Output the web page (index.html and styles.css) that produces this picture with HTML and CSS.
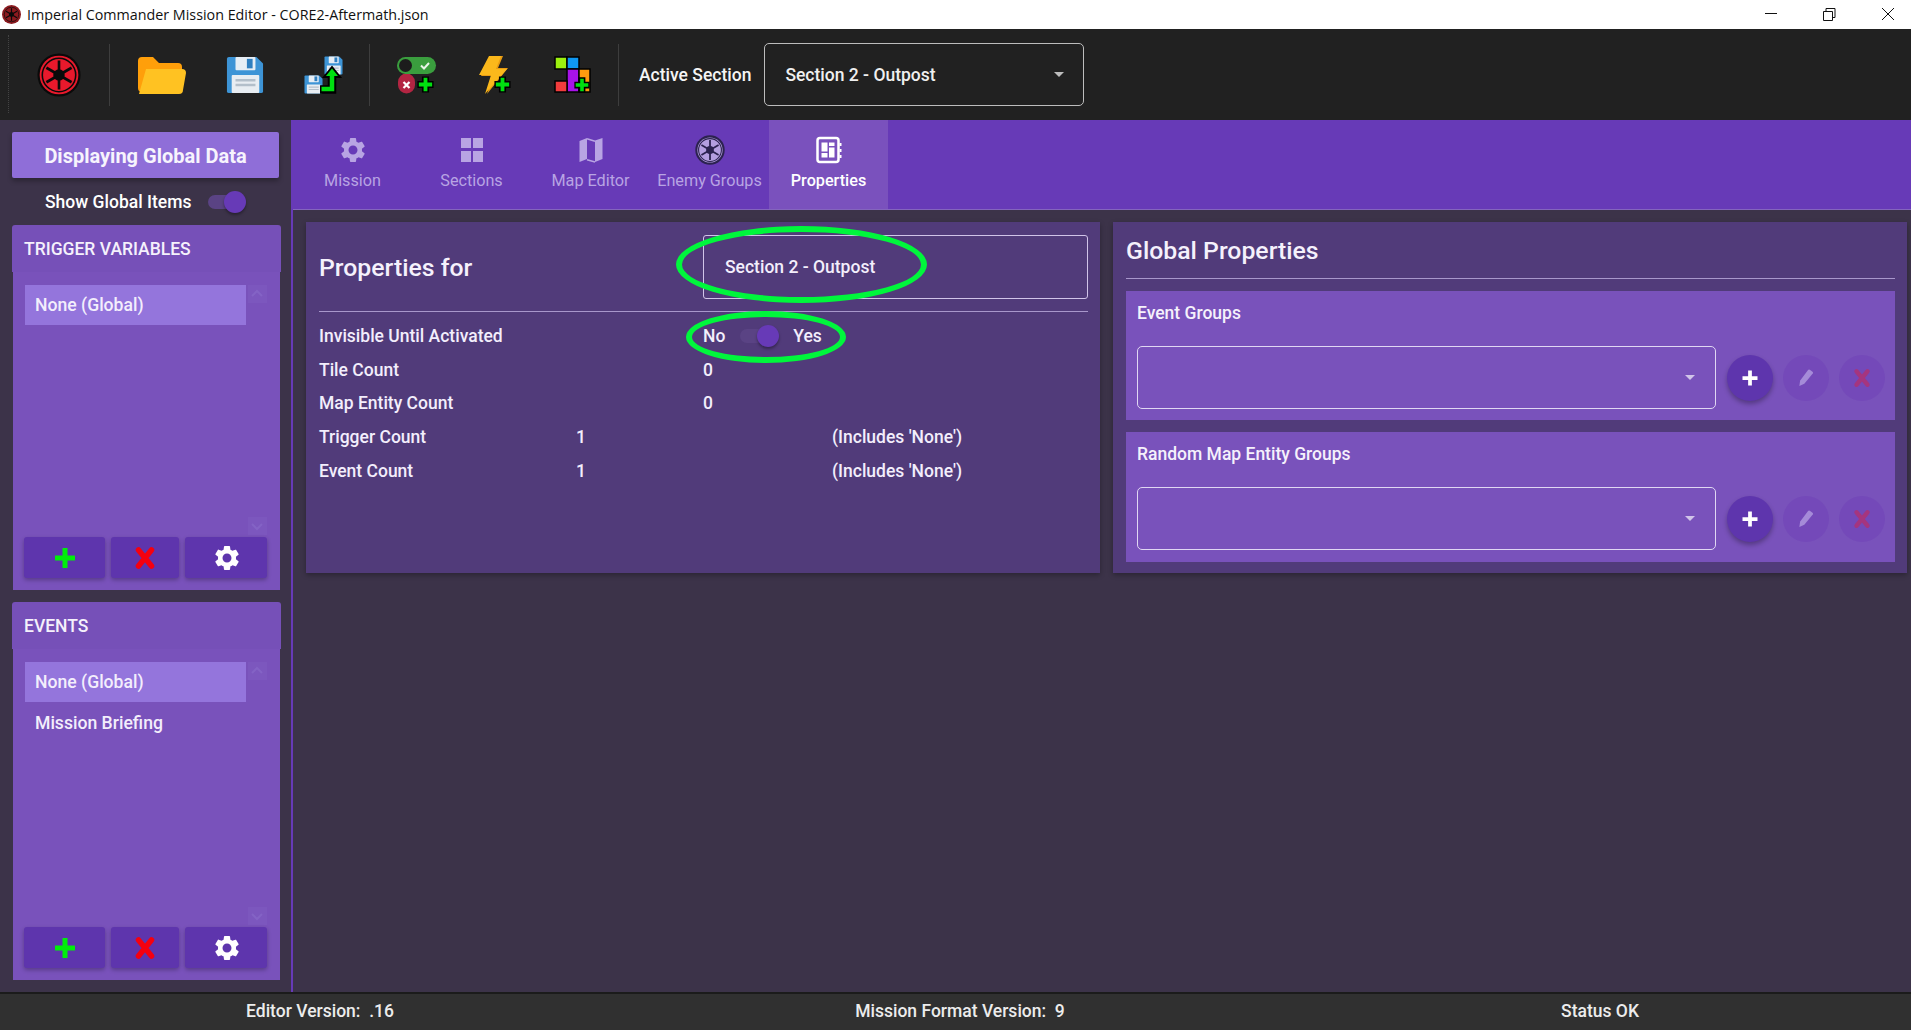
FILE: index.html
```html
<!DOCTYPE html>
<html lang="en">
<head>
<meta charset="utf-8">
<title>Imperial Commander Mission Editor</title>
<link rel="stylesheet" href="styles.css">
</head>
<body>
<svg class="defs" width="0" height="0" aria-hidden="true">
  <defs>
    <symbol id="cog" viewBox="0 0 24 24"><path d="M19.14 12.94c.04-.3.06-.61.06-.94 0-.32-.02-.64-.07-.94l2.03-1.58c.18-.14.23-.41.12-.61l-1.92-3.32c-.12-.22-.37-.29-.59-.22l-2.39.96c-.5-.38-1.03-.7-1.62-.94l-.36-2.54c-.04-.24-.24-.41-.48-.41h-3.84c-.24 0-.43.17-.47.41l-.36 2.54c-.59.24-1.13.57-1.62.94l-2.39-.96c-.22-.08-.47 0-.59.22L2.74 8.87c-.12.21-.08.47.12.61l2.03 1.58c-.05.3-.09.63-.09.94s.02.64.07.94l-2.03 1.58c-.18.14-.23.41-.12.61l1.92 3.32c.12.22.37.29.59.22l2.39-.96c.5.38 1.03.7 1.62.94l.36 2.54c.05.24.24.41.48.41h3.84c.24 0 .44-.17.47-.41l.36-2.54c.59-.24 1.13-.56 1.62-.94l2.39.96c.22.08.47 0 .59-.22l1.92-3.32c.12-.22.07-.47-.12-.61l-2.01-1.58zM12 15.6c-1.98 0-3.6-1.62-3.6-3.6s1.62-3.6 3.6-3.6 3.6 1.62 3.6 3.6-1.62 3.6-3.6 3.6z" fill="currentColor"/></symbol>
    <symbol id="spokes" viewBox="0 0 100 100">
      <g stroke="currentColor" stroke-width="6" stroke-linecap="butt">
        <path d="M50 17V83"/><path d="M21.400 33.500 78.600 66.500"/><path d="M21.400 66.500 78.600 33.500"/>
      </g>
      <circle cx="50" cy="50" r="13" fill="currentColor"/>
      <circle cx="50" cy="50" r="38" fill="none" stroke="currentColor" stroke-width="3.500"/>
    </symbol>
    <symbol id="gplus" viewBox="0 0 20 20">
      <path d="M10 1.500V18.500M1.500 10H18.500" stroke="#000" stroke-width="7.500"/>
      <path d="M10 3V17M3 10H17" stroke="#00e010" stroke-width="4"/>
    </symbol>
    <symbol id="disk" viewBox="0 0 40 40">
      <path d="M3 1H32L39 8V37a2 2 0 0 1-2 2H3a2 2 0 0 1-2-2V3a2 2 0 0 1 2-2z" fill="#3d94d6"/>
      <rect x="10" y="1" width="21" height="14" rx="1" fill="#e6eef5"/>
      <rect x="22" y="3" width="6" height="10" fill="#2f7fc0"/>
      <rect x="6" y="20" width="29" height="19" rx="1" fill="#e8edf2"/>
      <path d="M10 25.500H31M10 30.500H31" stroke="#b3bfca" stroke-width="2.500"/>
    </symbol>
    <symbol id="mini-x" viewBox="0 0 24 24"><path d="M5.500 4 18.500 20M18.500 4 5.500 20" stroke="currentColor" stroke-width="5.500" stroke-linecap="round" fill="none"/></symbol>
    <symbol id="mini-plus" viewBox="0 0 24 24"><path d="M12 2V22M2 12H22" stroke="currentColor" stroke-width="5" fill="none"/></symbol>
    <symbol id="pencil" viewBox="0 0 24 24"><path d="M4 21.500 5 15 14.500 2.500a1.500 1.500 0 0 1 2-.3l3.300 2.300a1.500 1.500 0 0 1 .3 2.100L10 19z" fill="currentColor"/></symbol>
    <symbol id="chev-up" viewBox="0 0 18 18"><path d="M4 11 9 6l5 5" fill="none" stroke="currentColor" stroke-width="2"/></symbol>
    <symbol id="chev-down" viewBox="0 0 18 18"><path d="M4 7l5 5 5-5" fill="none" stroke="currentColor" stroke-width="2"/></symbol>
  </defs>
</svg>

<div class="app">
  <header class="titlebar">
    <div class="title-left">
      <svg class="title-icon" viewBox="0 0 100 100"><circle cx="50" cy="50" r="50" fill="#8b1a1f"/><use href="#spokes" class="ink-black" width="100" height="100"/></svg>
      <span class="title-text">Imperial Commander Mission Editor - CORE2-Aftermath.json</span>
    </div>
    <div class="win-controls">
      <svg class="win-btn" viewBox="0 0 58 29"><path d="M28 13.500H40" stroke="#111" stroke-width="1" fill="none"/></svg>
      <svg class="win-btn" viewBox="0 0 58 29"><path d="M28.500 11.500h9v9h-9zM31 11.500V8.500h9v9h-2.500" stroke="#111" stroke-width="1" fill="none"/></svg>
      <svg class="win-btn" viewBox="0 0 58 29"><path d="M29 8l12 12M41 8 29 20" stroke="#111" stroke-width="1" fill="none"/></svg>
    </div>
  </header>

  <div class="toolbar">
    <span class="grip"></span>
    <div class="tool tool-logo">
      <svg width="44" height="44" viewBox="0 0 100 100"><circle cx="50" cy="50" r="49" fill="#0a0a0a"/><circle cx="50" cy="50" r="44" fill="#e8192c"/><use href="#spokes" class="ink-black" width="100" height="100"/></svg>
    </div>
    <span class="sep sep-a"></span>
    <div class="tool">
      <svg width="50" height="38" viewBox="0 0 50 38"><path d="M1 5a4 4 0 0 1 4-4h11l6 6h19a4 4 0 0 1 4 4v25H5a4 4 0 0 1-4-4z" fill="#ff9f0a"/><path d="M9 13h36a4 4 0 0 1 4 4l-3 17a4 4 0 0 1-4 4H2z" fill="#ffc222"/></svg>
    </div>
    <div class="tool tool-save">
      <svg width="38" height="38"><use href="#disk" width="38" height="38"/></svg>
    </div>
    <div class="tool tool-saveas">
      <svg width="40" height="38" viewBox="0 0 40 38">
        <use href="#disk" x="0" y="19" width="19" height="19"/>
        <use href="#disk" x="20" y="0" width="19" height="19"/>
        <path d="M16 33.500H28V20" fill="none" stroke="#000" stroke-width="8.500"/>
        <path d="M20 21 28 11l8 10z" fill="#00e010" stroke="#000" stroke-width="2"/>
        <path d="M17.500 33H28V19" fill="none" stroke="#00e010" stroke-width="4.500"/>
      </svg>
    </div>
    <span class="sep sep-b"></span>
    <div class="tool">
      <svg width="40" height="38" viewBox="0 0 40 38">
        <path d="M1 26a8.500 8.500 0 0 1 17 0v3a8.500 8.500 0 0 1-17 0z" fill="#b32542"/>
        <path d="M6.500 26l6 6M12.500 26l-6 6" stroke="#fff" stroke-width="2.200"/>
        <rect x="0" y="1" width="39" height="17" rx="8.500" fill="#3a9e3e"/>
        <circle cx="8.500" cy="9.500" r="6.500" fill="#1c1c1c"/>
        <path d="M24 9.500l3 3 5-5.500" fill="none" stroke="#e8f5e9" stroke-width="2"/>
        <use href="#gplus" x="19" y="19" width="19" height="19"/>
      </svg>
    </div>
    <div class="tool">
      <svg width="34" height="38" viewBox="0 0 34 38">
        <path d="M12 0H25L20 12h10L9 38l6-18H3z" fill="#e89a12"/>
        <path d="M10 0H22L17 13h11L6 38l6-19H0z" fill="#fbb81b" transform="translate(1 0)"/>
        <use href="#gplus" x="15" y="19" width="19" height="19"/>
      </svg>
    </div>
    <div class="tool">
      <svg width="38" height="38" viewBox="0 0 38 38">
        <rect x="1" y="1" width="12" height="12" fill="#9cf00f" stroke="#000" stroke-width="1.500"/>
        <rect x="13" y="1" width="12" height="12" fill="#0f97f2" stroke="#000" stroke-width="1.500"/>
        <rect x="13" y="13" width="12" height="23" fill="#a812e8" stroke="#000" stroke-width="1.500"/>
        <rect x="25" y="13" width="11" height="23" fill="#ff9c0f" stroke="#000" stroke-width="1.500"/>
        <rect x="1" y="25" width="12" height="11" fill="#f23c3c" stroke="#000" stroke-width="1.500"/>
        <use href="#gplus" x="19" y="20" width="18" height="18"/>
      </svg>
    </div>
    <span class="sep sep-c"></span>
    <span class="active-label">Active Section</span>
    <div class="active-select">
      <span>Section 2 - Outpost</span>
      <span class="caret caret-light"></span>
    </div>
  </div>

  <div class="workspace">
    <aside class="sidebar">
      <button class="global-btn">Displaying Global Data</button>
      <div class="show-row">
        <span>Show Global Items</span>
        <span class="switch"><span class="knob"></span></span>
      </div>

      <section class="side-panel side-panel-a">
        <h3 class="side-head">TRIGGER VARIABLES</h3>
        <div class="side-body">
          <div class="list-wrap">
            <ul class="list">
              <li class="list-item selected">None (Global)</li>
            </ul>
            <div class="scroll-col">
              <span class="scroll-btn"><svg width="18" height="18"><use href="#chev-up"/></svg></span>
              <span class="scroll-btn"><svg width="18" height="18"><use href="#chev-down"/></svg></span>
            </div>
          </div>
          <div class="action-row">
            <button class="action"><svg class="ico-green" width="24" height="24"><use href="#mini-plus"/></svg></button>
            <button class="action"><svg class="ico-red" width="24" height="24"><use href="#mini-x"/></svg></button>
            <button class="action action-cog"><svg class="ico-white" width="30" height="30"><use href="#cog"/></svg></button>
          </div>
        </div>
      </section>

      <section class="side-panel side-panel-b">
        <h3 class="side-head">EVENTS</h3>
        <div class="side-body">
          <div class="list-wrap">
            <ul class="list">
              <li class="list-item selected">None (Global)</li>
              <li class="list-item">Mission Briefing</li>
            </ul>
            <div class="scroll-col">
              <span class="scroll-btn"><svg width="18" height="18"><use href="#chev-up"/></svg></span>
              <span class="scroll-btn"><svg width="18" height="18"><use href="#chev-down"/></svg></span>
            </div>
          </div>
          <div class="action-row">
            <button class="action"><svg class="ico-green" width="24" height="24"><use href="#mini-plus"/></svg></button>
            <button class="action"><svg class="ico-red" width="24" height="24"><use href="#mini-x"/></svg></button>
            <button class="action action-cog"><svg class="ico-white" width="30" height="30"><use href="#cog"/></svg></button>
          </div>
        </div>
      </section>
    </aside>

    <main class="main">
      <nav class="tabs">
        <div class="tab">
          <svg class="tab-icon" width="30" height="30"><use href="#cog"/></svg>
          <span>Mission</span>
        </div>
        <div class="tab">
          <svg class="tab-icon" width="30" height="30" viewBox="0 0 30 30"><path d="M4 3h10v10H4zM16 3h10v10H16zM4 16h10v11H4zM16 16h10v11H16z" fill="currentColor"/></svg>
          <span>Sections</span>
        </div>
        <div class="tab">
          <svg class="tab-icon" width="30" height="30" viewBox="0 0 30 30"><path d="M3.500 6 11 3v21l-7.500 3zM19 5.500 26.500 3v21L19 27z" fill="currentColor"/><path d="M11 3.800 19 6.300M11 24.800 19 27" fill="none" stroke="currentColor" stroke-width="1.500"/></svg>
          <span>Map Editor</span>
        </div>
        <div class="tab">
          <svg class="tab-icon" width="30" height="30" viewBox="0 0 100 100"><circle cx="50" cy="50" r="49" fill="#2c2250"/><circle cx="50" cy="50" r="42" fill="#b49ee0"/><use href="#spokes" class="ink-dark" width="100" height="100"/></svg>
          <span>Enemy Groups</span>
        </div>
        <div class="tab tab-active">
          <svg class="tab-icon" width="30" height="30" viewBox="0 0 30 30"><rect x="3.500" y="3" width="21" height="24" rx="2.500" fill="none" stroke="currentColor" stroke-width="2.500"/><path d="M7.500 7.500h6v9h-6zM15 7.500h5.500v3.500H15zM15 12.500h5.500v10H15zM7.500 18h6v4.500h-6z" fill="currentColor"/><path d="M26.500 8v3M26.500 14v3M26.500 20v3" stroke="currentColor" stroke-width="2"/></svg>
          <span>Properties</span>
        </div>
      </nav>

      <div class="content">
        <section class="card card-props">
          <div class="props-head">
            <h2 class="card-title">Properties for</h2>
            <div class="name-box">Section 2 - Outpost</div>
          </div>
          <div class="props-grid">
            <span>Invisible Until Activated</span>
            <span></span>
            <span class="yes-no">No <span class="switch switch-wide"><span class="knob"></span></span> Yes</span>
            <span></span>

            <span>Tile Count</span><span></span><span>0</span><span></span>
            <span>Map Entity Count</span><span></span><span>0</span><span></span>
            <span>Trigger Count</span><span>1</span><span></span><span>(Includes 'None')</span>
            <span>Event Count</span><span>1</span><span></span><span>(Includes 'None')</span>
          </div>
          <span class="mark mark-name"></span>
          <span class="mark mark-toggle"></span>
        </section>

        <section class="card card-global">
          <h2 class="card-title global-title">Global Properties</h2>
          <div class="sub-card">
            <h4 class="sub-title">Event Groups</h4>
            <div class="sub-row">
              <div class="empty-select"><span class="caret caret-pale"></span></div>
              <button class="fab fab-on"><svg width="18" height="18"><use href="#mini-plus"/></svg></button>
              <button class="fab fab-off"><svg class="ico-pencil" width="20" height="20"><use href="#pencil"/></svg></button>
              <button class="fab fab-off"><svg class="ico-dimx" width="20" height="20"><use href="#mini-x"/></svg></button>
            </div>
          </div>
          <div class="sub-card">
            <h4 class="sub-title">Random Map Entity Groups</h4>
            <div class="sub-row">
              <div class="empty-select"><span class="caret caret-pale"></span></div>
              <button class="fab fab-on"><svg width="18" height="18"><use href="#mini-plus"/></svg></button>
              <button class="fab fab-off"><svg class="ico-pencil" width="20" height="20"><use href="#pencil"/></svg></button>
              <button class="fab fab-off"><svg class="ico-dimx" width="20" height="20"><use href="#mini-x"/></svg></button>
            </div>
          </div>
        </section>
      </div>
    </main>
  </div>

  <footer class="statusbar">
    <span>Editor Version:&nbsp; .16</span>
    <span>Mission Format Version:&nbsp; 9</span>
    <span class="status-ok">Status OK</span>
  </footer>
</div>
</body>
</html>
```

FILE: styles.css
```css
* { box-sizing: border-box; }
html, body { margin: 0; height: 100%; overflow: hidden; }
body { font-family: Roboto, "Liberation Sans", sans-serif; font-weight: 500; color: #fff; background: #3c3349; }
h2, h3, h4, ul { margin: 0; padding: 0; }
button { font: inherit; color: inherit; border: 0; padding: 0; cursor: default; }
svg { display: block; }
.defs { position: absolute; }
.ink-black { color: #0a0a0a; }
.ink-dark { color: #2c2250; }

.app { height: 1030px; display: flex; flex-direction: column; }

.titlebar { height: 29px; flex: none; background: #fff; display: flex; justify-content: space-between; align-items: stretch; }
.title-left { display: flex; align-items: center; }
.title-icon { width: 19px; height: 19px; margin: 0 6px 0 2px; }
.title-text { font-family: "Open Sans", "Noto Sans", sans-serif; font-weight: 400; font-size: 14.3px; color: #111; }
.win-controls { display: flex; }
.win-btn { width: 58px; height: 29px; }

.toolbar { height: 91px; flex: none; background: #212121; display: flex; align-items: center; padding-left: 20px; position: relative; }
.grip { position: absolute; left: 8px; top: 6px; bottom: 7px; border-left: 1px dotted #444; }
.tool { width: 78px; height: 46px; flex: none; display: flex; align-items: center; justify-content: center; }
.tool-save { margin-left: 5px; }
.tool-saveas { margin-left: 1px; }
.sep { width: 1px; height: 62px; background: #3d3d3d; flex: none; }
.sep-a { margin: 0 13px 0 11px; }
.sep-b { margin: 0 8px 0 6px; }
.sep-c { margin: 0 20px 0 6px; }
.active-label { font-size: 17.5px; margin-right: 13px; color: #f5f5f5; white-space: nowrap; }
.active-select { width: 320px; height: 63px; border: 1px solid #bdbdbd; border-radius: 5px; display: flex; align-items: center; justify-content: space-between; padding: 0 19px 0 20px; font-size: 17.5px; color: #f0f0f0; }
.caret { width: 0; height: 0; border-left: 5px solid transparent; border-right: 5px solid transparent; }
.caret-light { border-top: 5px solid #bdbdbd; }
.caret-pale { border-top: 5px solid #d1c4e9; }

.workspace { flex: 1; min-height: 0; display: flex; }
.sidebar { width: 293px; flex: none; padding: 12px 10px 12px 12px; border-right: 2px solid #673ab7; background: #3c3349; display: flex; flex-direction: column; }
.global-btn { width: 267px; height: 46px; flex: none; background: #8f6ed8; border-radius: 2px; font-size: 20px; font-weight: 700; padding-top: 2px; box-shadow: 0 3px 5px rgba(0,0,0,.3); color: #f7f4fd; }
.show-row { height: 47px; flex: none; display: flex; align-items: center; font-size: 17.5px; padding-left: 33px; gap: 17px; }
.switch { display: inline-block; position: relative; width: 37px; height: 14px; background: #5a4384; border-radius: 7px; }
.knob { position: absolute; right: -1px; top: -4px; width: 22px; height: 22px; border-radius: 50%; background: #673ab7; box-shadow: 0 2px 3px rgba(0,0,0,.35); }

.side-panel { width: 269px; display: flex; flex-direction: column; }
.side-panel-a { height: 365px; margin-bottom: 12px; }
.side-panel-b { height: 378px; }
.side-head { height: 47px; flex: none; background: #7650b8; border-radius: 3px 3px 0 0; font-size: 17.5px; font-weight: 500; line-height: 48px; padding-left: 12px; color: #f5f1fc; }
.side-body { flex: 1; min-height: 0; margin: 0 1px; background: #7952bb; display: flex; flex-direction: column; padding: 13px 12px 12px 12px; }
.list-wrap { flex: 1; min-height: 0; display: flex; gap: 2px; }
.list { list-style: none; width: 221px; flex: none; }
.list-item { height: 40px; line-height: 40px; padding-left: 10px; font-size: 17.6px; color: #f3eefc; margin-bottom: 1px; }
.selected { background: #9475dc; }
.scroll-col { width: 19px; display: flex; flex-direction: column; justify-content: space-between; padding-bottom: 1px; }
.scroll-btn { width: 19px; height: 18px; background: #7c57be; color: #8463c5; display: block; }
.action-row { display: grid; grid-template-columns: 81px 68px 82px; gap: 6px; height: 41px; flex: none; margin: 1px 0 0 -1px; }
.action { background: #5e35ad; border-radius: 3px; display: flex; align-items: center; justify-content: center; box-shadow: 0 2px 4px rgba(0,0,0,.28); }
.action-cog { padding-left: 2px; }
.ico-green { color: #00f00a; }
.ico-red { color: #f5000f; }
.ico-white { color: #fff; }

.main { flex: 1; min-width: 0; display: flex; flex-direction: column; }
.tabs { height: 90px; flex: none; display: flex; background: #673ab7; border-bottom: 1px solid #8465bd; }
.tab { width: 119px; padding-top: 15px; display: flex; flex-direction: column; align-items: center; gap: 6px; color: #b8a4e3; font-size: 16.2px; font-weight: 400; }
.tab-active { background: #7a51bd; color: #fff; font-weight: 500; }

.content { flex: 1; display: grid; grid-template-columns: 794px 794px; gap: 13px; padding: 12px 0 0 13px; align-items: start; }
.card { height: 351px; background: #513b7a; box-shadow: 0 2px 5px rgba(0,0,0,.3); padding: 0 12px 0 13px; position: relative; }
.card-title { font-size: 24.8px; font-weight: 500; color: #f5f1fc; }
.props-head { height: 90px; display: grid; grid-template-columns: 384px 1fr; align-items: center; border-bottom: 1px solid #a897cb; }
.props-head .card-title { padding-top: 2px; }
.name-box { height: 64px; margin-top: 1px; border: 1px solid #d1c4e9; border-radius: 3px; display: flex; align-items: center; padding-left: 21px; font-size: 17.5px; color: #f3eefc; }
.props-grid { display: grid; grid-template-columns: 257px 127px 129px 1fr; grid-auto-rows: 33.7px; align-items: center; font-size: 17.5px; padding-top: 7px; color: #f3eefc; }
.yes-no { display: flex; align-items: center; gap: 15px; }
.switch-wide { width: 38px; }
.mark { position: absolute; border: 6px solid #00f63c; border-radius: 50%; pointer-events: none; }
.mark-name { left: 370px; top: 4px; width: 251px; height: 77px; }
.mark-toggle { left: 380px; top: 89px; width: 160px; height: 52px; }

.global-title { height: 57px; line-height: 57px; border-bottom: 1px solid #a897cb; }
.sub-card { height: 129px; margin-top: 12px; background: #7952bb; padding: 0 10px 0 11px; }
.sub-card + .sub-card { margin-top: 12px; height: 130px; }
.sub-title { height: 55px; line-height: 45px; font-size: 17.5px; font-weight: 500; color: #f5f1fc; }
.sub-row { display: flex; align-items: center; gap: 10px; }
.empty-select { width: 579px; height: 63px; border: 1px solid #e0d7f3; border-radius: 5px; display: flex; align-items: center; justify-content: flex-end; padding-right: 20px; margin-right: 1px; }
.fab { width: 46px; height: 46px; border-radius: 50%; display: flex; align-items: center; justify-content: center; }
.fab-on { background: #5e35ad; color: #fff; box-shadow: 0 3px 5px rgba(0,0,0,.3); }
.fab-off { background: #7449b9; }
.ico-pencil { color: #a58bd8; }
.ico-dimx { color: #a5357f; }

.statusbar { height: 38px; flex: none; background: #303030; border-top: 2px solid #1b1b1b; display: grid; grid-template-columns: 640px 640px 1fr; align-items: center; justify-items: center; font-size: 17.5px; color: #ececec; padding-bottom: 3px; }
.status-ok { margin-left: 9px; }
```
